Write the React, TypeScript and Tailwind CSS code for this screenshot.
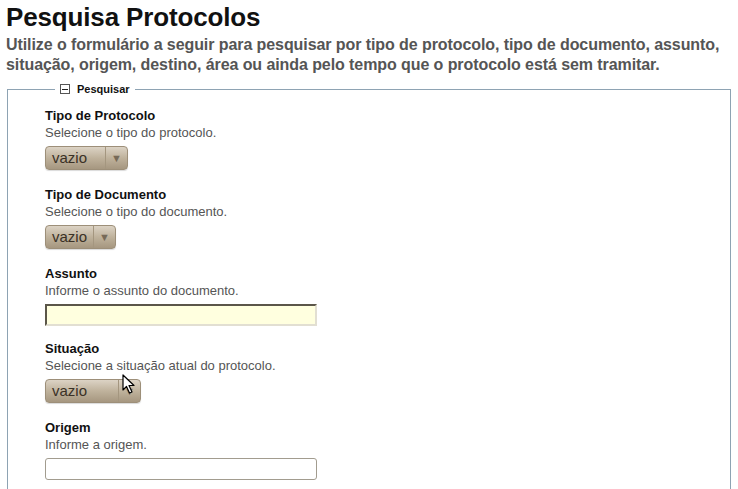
import React from "react";

// Campos do formulário de pesquisa
interface Campo {
  label: string;
  descricao: string;
  tipo: "select" | "texto" | "destaque";
  largura: string;
}

const campos: Campo[] = [
  { label: "Tipo de Protocolo", descricao: "Selecione o tipo do protocolo.", tipo: "select", largura: "w-[59px]" },
  { label: "Tipo de Documento", descricao: "Selecione o tipo do documento.", tipo: "select", largura: "w-[47px]" },
  { label: "Assunto", descricao: "Informe o assunto do documento.", tipo: "destaque", largura: "w-[272px]" },
  { label: "Situação", descricao: "Selecione a situação atual do protocolo.", tipo: "select", largura: "w-[72px]" },
  { label: "Origem", descricao: "Informe a origem.", tipo: "texto", largura: "w-[272px]" },
];

const SelectVazio: React.FC<{ largura: string; cursor?: boolean }> = ({ largura, cursor }) => (
  <div className="relative inline-flex h-[24px] rounded-[4px] border border-[#9d8f79] bg-gradient-to-b from-[#dcd3c5] via-[#bfb29c] to-[#a69780] shadow-[0_1px_1px_rgba(0,0,0,0.15)]">
    <span className={`${largura} pl-[6px] text-[15px] leading-[22px] text-[#3a3126]`}>vazio</span>
    <span className="flex w-[22px] items-center justify-center border-l border-[#a4967f] text-[11px] text-[#776a58]">▼</span>
    {cursor && (
      <svg className="absolute left-[76px] top-[-6px]" width="14" height="21" viewBox="0 0 14 21">
        <path d="M1 1 L1 16 L4.5 12.5 L7.5 19 L10 18 L7 11.5 L12 11.5 Z" fill="#fff" stroke="#000" strokeWidth="1.2" strokeLinejoin="round" />
      </svg>
    )}
  </div>
);

const App: React.FC = () => {
  return (
    <div className="h-[489px] overflow-hidden bg-white font-['Liberation_Sans',Arial,sans-serif]">
      <h1 className="pl-[6px] pt-[2px] text-[26px] font-bold leading-[30px] tracking-[-0.15px] text-[#111]">
        Pesquisa Protocolos
      </h1>
      <p className="mt-[3px] pl-[6px] text-[16px] font-bold leading-[20px] tracking-[-0.08px] text-[#555]">
        Utilize o formulário a seguir para pesquisar por tipo de protocolo, tipo de documento, assunto,
        <br />
        situação, origem, destino, área ou ainda pelo tempo que o protocolo está sem tramitar.
      </p>

      <fieldset className="mt-[6px] ml-[7px] w-[724px] border border-[#8ea3b3] pb-[40px] pl-[37px] pt-[11px]">
        <legend className="ml-[10px] flex items-center px-[5px] text-[11px] font-bold leading-[16px] text-[#111]">
          <span className="mr-[7px] flex h-[10px] w-[10px] items-center justify-center border border-[#555]">
            <span className="h-px w-[6px] bg-[#222]" />
          </span>
          Pesquisar
        </legend>

        {campos.map((campo, i) => (
          <div key={campo.label} className={campo.tipo === "destaque" ? "mb-[15px]" : "mb-[17px]"}>
            <div className="text-[13px] font-bold leading-[16px] text-[#111]">{campo.label}</div>
            <div className="text-[13px] leading-[18px] text-[#555]">{campo.descricao}</div>
            <div className="mt-[4px]">
              {campo.tipo === "select" && <SelectVazio largura={campo.largura} cursor={i === 3} />}
              {campo.tipo === "destaque" && (
                <input
                  type="text"
                  className="block h-[22px] w-[272px] border-2 border-t-[#5b5649] border-l-[#5b5649] border-b-[#e2dfd2] border-r-[#e2dfd2] bg-[#ffffdf] outline-none"
                />
              )}
              {campo.tipo === "texto" && (
                <input
                  type="text"
                  className="block h-[22px] w-[272px] rounded-[3px] border border-[#a29c8f] bg-white outline-none"
                />
              )}
            </div>
          </div>
        ))}
      </fieldset>
    </div>
  );
};

export default App;
